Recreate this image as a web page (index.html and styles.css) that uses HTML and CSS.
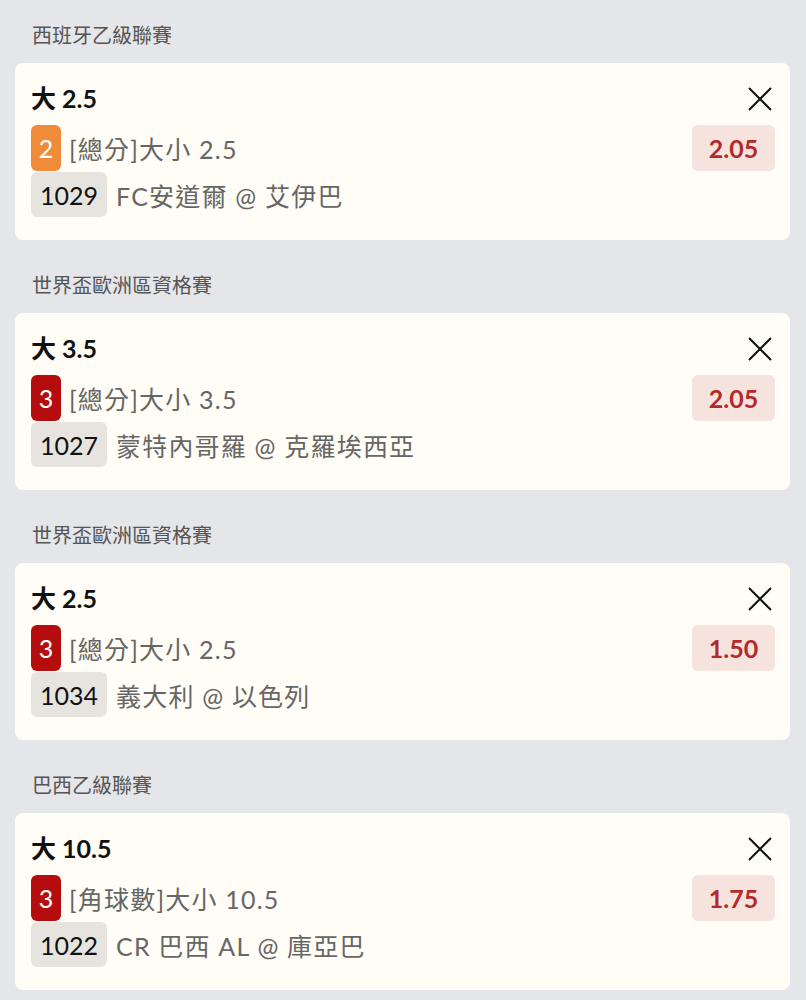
FILE: index.html
```html
<!DOCTYPE html>
<html lang="zh-Hant">

<head>
    <meta charset="UTF-8">
    <meta name="viewport" content="width=device-width, initial-scale=1.0">
    <title>投注單</title>
    <link rel="stylesheet" href="styles.css">
</head>

<body>
    <div class="slip">
        <div class="league">西班牙乙級聯賽</div>
        <div class="bet">
            <div class="row">
                <div class="pick">大 2.5</div>
                <button class="close" aria-label="移除">
                    <svg viewBox="0 0 24 24" width="24" height="24"><path d="M1 1 L23 23 M23 1 L1 23" /></svg>
                </button>
            </div>
            <div class="row market-row">
                <div class="market">
                    <span class="badge orange">2</span>
                    <span class="label">[總分]大小 2.5</span>
                </div>
                <div class="odds">2.05</div>
            </div>
            <div class="row">
                <div class="match">
                    <span class="code">1029</span>
                    <span class="label">FC安道爾 @ 艾伊巴</span>
                </div>
            </div>
        </div>

        <div class="league">世界盃歐洲區資格賽</div>
        <div class="bet">
            <div class="row">
                <div class="pick">大 3.5</div>
                <button class="close" aria-label="移除">
                    <svg viewBox="0 0 24 24" width="24" height="24"><path d="M1 1 L23 23 M23 1 L1 23" /></svg>
                </button>
            </div>
            <div class="row market-row">
                <div class="market">
                    <span class="badge red">3</span>
                    <span class="label">[總分]大小 3.5</span>
                </div>
                <div class="odds">2.05</div>
            </div>
            <div class="row">
                <div class="match">
                    <span class="code">1027</span>
                    <span class="label">蒙特內哥羅 @ 克羅埃西亞</span>
                </div>
            </div>
        </div>

        <div class="league">世界盃歐洲區資格賽</div>
        <div class="bet">
            <div class="row">
                <div class="pick">大 2.5</div>
                <button class="close" aria-label="移除">
                    <svg viewBox="0 0 24 24" width="24" height="24"><path d="M1 1 L23 23 M23 1 L1 23" /></svg>
                </button>
            </div>
            <div class="row market-row">
                <div class="market">
                    <span class="badge red">3</span>
                    <span class="label">[總分]大小 2.5</span>
                </div>
                <div class="odds">1.50</div>
            </div>
            <div class="row">
                <div class="match">
                    <span class="code">1034</span>
                    <span class="label">義大利 @ 以色列</span>
                </div>
            </div>
        </div>

        <div class="league">巴西乙級聯賽</div>
        <div class="bet">
            <div class="row">
                <div class="pick">大 10.5</div>
                <button class="close" aria-label="移除">
                    <svg viewBox="0 0 24 24" width="24" height="24"><path d="M1 1 L23 23 M23 1 L1 23" /></svg>
                </button>
            </div>
            <div class="row market-row">
                <div class="market">
                    <span class="badge red">3</span>
                    <span class="label">[角球數]大小 10.5</span>
                </div>
                <div class="odds">1.75</div>
            </div>
            <div class="row">
                <div class="match">
                    <span class="code">1022</span>
                    <span class="label">CR 巴西 AL @ 庫亞巴</span>
                </div>
            </div>
        </div>
    </div>
</body>

</html>
```

FILE: styles.css
```css
body {
    margin: 0;
    background: #e5e6e9;
    font-family: Lato, "Noto Sans CJK TC", sans-serif;
    color: #111;
}

.slip {
    padding: 0 16px 0 15px;
}

.league {
    height: 63px;
    box-sizing: border-box;
    padding: 0 0 14px 17px;
    font-size: 20px;
    line-height: 28px;
    color: #555;
    display: flex;
    align-items: flex-end;
}

.bet {
    background: #fffdf5;
    border-radius: 8px;
    padding: 20px 15px 23px 16px;
    height: 134px;
    margin-bottom: 10px;
    display: flex;
    flex-direction: column;
}

.row {
    display: flex;
    align-items: center;
    justify-content: space-between;
}

.pick {
    font-size: 25px;
    font-weight: bold;
    line-height: 30px;
    height: 30px;
}

.close {
    border: none;
    background: none;
    padding: 0;
    margin-right: 3px;
    width: 24px;
    height: 24px;
    margin-top: 2px;
}

.close svg {
    display: block;
    stroke: #111;
    stroke-width: 2;
    fill: none;
}

.market-row {
    margin-top: 12px;
}

.market,
.match {
    display: flex;
    align-items: center;
    gap: 8px;
}

.match {
    margin-top: 1px;
    gap: 9px;
}

.label {
    font-size: 25px;
    letter-spacing: 1.2px;
    color: #666;
}

.badge {
    width: 30px;
    height: 46px;
    border-radius: 6px;
    color: #fff;
    font-size: 25px;
    display: flex;
    align-items: center;
    justify-content: center;
}

.badge.orange {
    background: #f08b3a;
}

.badge.red {
    background: #b50d0d;
}

.code {
    background: #e7e4df;
    border-radius: 6px;
    height: 45px;
    width: 76px;
    font-size: 25px;
    color: #111;
    display: flex;
    align-items: center;
    justify-content: center;
}

.odds {
    width: 83px;
    height: 46px;
    border-radius: 6px;
    background: #f7e3dd;
    color: #b32a2a;
    font-size: 25px;
    font-weight: bold;
    display: flex;
    align-items: center;
    justify-content: center;
}
```
